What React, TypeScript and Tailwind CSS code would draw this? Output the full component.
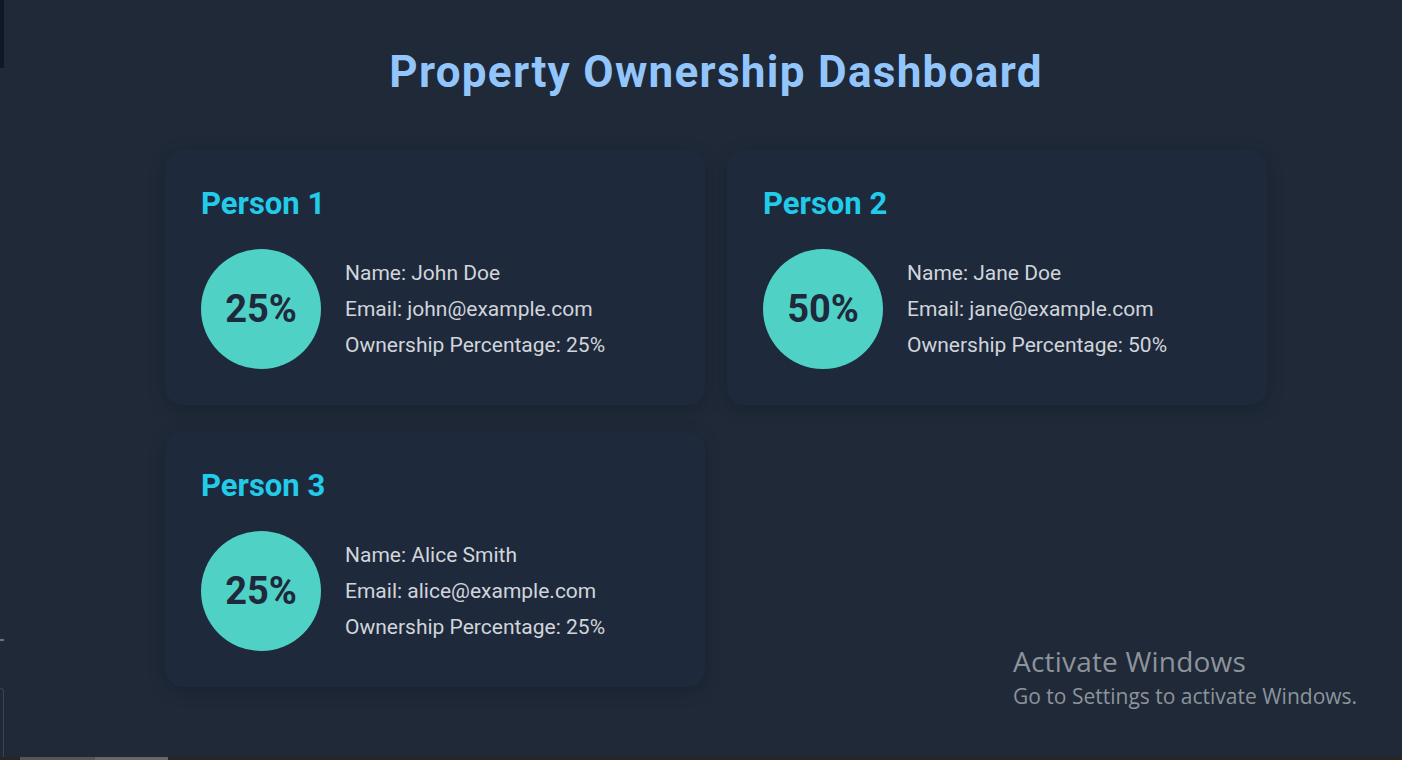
const owners = [
  { id: 1, name: "John Doe", email: "john@example.com", share: 25 },
  { id: 2, name: "Jane Doe", email: "jane@example.com", share: 50 },
  { id: 3, name: "Alice Smith", email: "alice@example.com", share: 25 },
];

function OwnerCard({ owner }: { owner: (typeof owners)[number] }) {
  return (
    <div className="rounded-[18px] bg-[#1e2a3c] p-9 shadow-[0_4px_18px_rgba(0,0,0,0.18)]">
      <h2 className="mb-[27px] text-[31px] leading-[36px] font-bold text-[#22cbe9]">Person {owner.id}</h2>
      <div className="flex items-center gap-6">
        <div className="flex h-[120px] w-[120px] shrink-0 items-center justify-center rounded-full bg-[#4fd1c5]">
          <span className="text-[38px] font-bold text-[#1e293b]">{owner.share}%</span>
        </div>
        <div className="flex flex-col gap-[8px] text-[21px] leading-[28px] text-[#d1d5db]">
          <p>Name: {owner.name}</p>
          <p>Email: {owner.email}</p>
          <p>Ownership Percentage: {owner.share}%</p>
        </div>
      </div>
    </div>
  );
}

export default function App() {
  return (
    <div className="relative h-[760px] w-full overflow-hidden bg-[#1f2938] font-['Roboto',sans-serif]">
      <div className="absolute left-0 top-0 h-[68px] w-[4px] bg-[#0f1729]" />
      <div className="absolute left-0 top-[639px] h-[2px] w-[4px] bg-[#6b7280]" />
      <div className="absolute left-0 top-[688px] h-[72px] w-[4px] rounded-tr border-r border-t border-[#3a4452]" />

      <main className="flex flex-col items-center pl-[30px] pt-[45px]">
        <h1 className="text-[44px] leading-[54px] font-bold tracking-[1.3px] text-[#93c5fd]">Property Ownership Dashboard</h1>
        <div className="mt-[51px] grid grid-cols-[540px_540px] gap-x-[22px] gap-y-[27px]">
          {owners.map((o) => (
            <OwnerCard key={o.id} owner={o} />
          ))}
        </div>
      </main>

      <div className="pointer-events-none absolute left-[1013px] top-[644px] font-['Open_Sans','Noto_Sans',sans-serif] text-[#8d939b]">
        <p className="text-[28px] leading-[34px] tracking-[0.2px]">Activate Windows</p>
        <p className="mt-[5px] text-[21px] leading-[26px]">Go to Settings to activate Windows.</p>
      </div>

      <div className="absolute bottom-0 left-0 flex h-[3px] w-full bg-[#2a2422]">
        <div className="ml-[20px] h-full w-[75px] bg-[#5a5552]" />
        <div className="h-full w-[73px] bg-[#6b6663]" />
      </div>
    </div>
  );
}
